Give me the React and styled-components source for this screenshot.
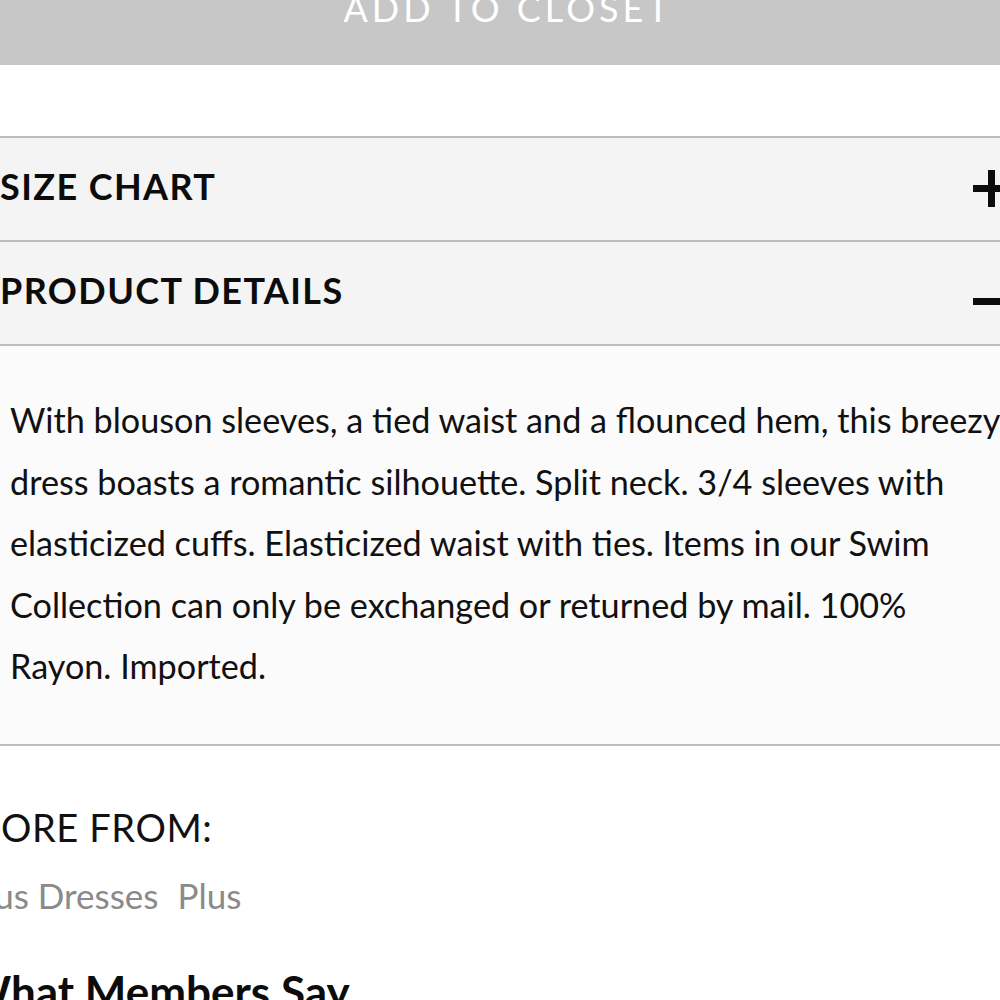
import styled, { createGlobalStyle } from 'styled-components';

const GlobalStyle = createGlobalStyle`
  html, body {
    margin: 0;
    padding: 0;
    background: #ffffff;
  }
  body {
    font-family: Lato, "Open Sans", sans-serif;
    color: #111;
  }
`;

const Viewport = styled.div`
  width: 1000px;
  height: 1000px;
  overflow: hidden;
`;

const Page = styled.div`
  width: 1086px;
  margin-left: -35px;
  display: flex;
  flex-direction: column;
`;

const CloseButton = styled.button`
  height: 118px;
  margin-top: -53px;
  border: none;
  background: #c7c7c7;
  color: #ffffff;
  font-family: Lato, sans-serif;
  font-size: 36px;
  font-weight: 400;
  letter-spacing: 4px;
  display: flex;
  align-items: center;
  justify-content: center;
  padding: 4px 0 0;
`;

const Accordion = styled.div`
  margin-top: 71px;
  border-top: 2px solid #bdbdbd;
`;

const Header = styled.div`
  height: 104px;
  box-sizing: border-box;
  background: #f4f4f4;
  border-bottom: 2px solid #bdbdbd;
  display: flex;
  align-items: center;
  justify-content: space-between;
  padding: 0 42px 6px 35px;
`;

const Title = styled.span`
  font-size: 36px;
  font-weight: 700;
  letter-spacing: 1.4px;
  color: #0c0c0c;
`;

const Toggle = styled.span`
  position: relative;
  width: 36px;
  height: 37px;
  flex-shrink: 0;
  transform: translateY(${p => (p.$open ? '11px' : '2px')});

  &::before {
    content: '';
    position: absolute;
    left: 0;
    right: 0;
    top: 15px;
    height: 7px;
    background: #0c0c0c;
  }

  &::after {
    content: '';
    display: ${p => (p.$open ? 'none' : 'block')};
    position: absolute;
    top: 0;
    bottom: 0;
    left: 15px;
    width: 7px;
    background: #0c0c0c;
  }
`;

const Body = styled.div`
  background: #fbfbfb;
  border-bottom: 2px solid #bdbdbd;
  padding: 43px 20px 0 45px;
  height: 400px;
  box-sizing: border-box;
`;

const Description = styled.p`
  margin: 0;
  font-size: 34.2px;
  line-height: 61.5px;
  color: #111;
  white-space: nowrap;
`;

const MoreFrom = styled.section`
  padding-top: 56px;
  display: flex;
  flex-direction: column;
`;

const Label = styled.h3`
  margin: 0;
  font-size: 38px;
  font-weight: 400;
  letter-spacing: 0.6px;
  line-height: 50px;
  color: #111;
`;

const Links = styled.div`
  display: flex;
  gap: 19px;
  margin-top: 18px;
`;

const CategoryLink = styled.a`
  font-size: 35px;
  line-height: 50px;
  color: #8a8a8a;
  text-decoration: none;
`;

const Reviews = styled.h2`
  margin: 46px 0 0;
  font-size: 44px;
  font-weight: 700;
  line-height: 50px;
  color: #0c0c0c;
`;

const lines = [
  'With blouson sleeves, a tied waist and a flounced hem, this breezy',
  'dress boasts a romantic silhouette. Split neck. 3/4 sleeves with',
  'elasticized cuffs. Elasticized waist with ties. Items in our Swim',
  'Collection can only be exchanged or returned by mail. 100%',
  'Rayon. Imported.',
];

export default function App() {
  return (
    <>
      <GlobalStyle />
      <Viewport>
        <Page>
          <CloseButton>ADD TO CLOSET</CloseButton>
          <Accordion>
            <Header>
              <Title>SIZE CHART</Title>
              <Toggle />
            </Header>
            <Header>
              <Title>PRODUCT DETAILS</Title>
              <Toggle $open />
            </Header>
            <Body>
              <Description>
                {lines.map((l, i) => (
                  <span key={i}>
                    {l}
                    {i < lines.length - 1 && <br />}
                  </span>
                ))}
              </Description>
            </Body>
          </Accordion>
          <MoreFrom>
            <Label>MORE FROM:</Label>
            <Links>
              <CategoryLink href="#">Plus Dresses</CategoryLink>
              <CategoryLink href="#">Plus</CategoryLink>
            </Links>
          </MoreFrom>
          <Reviews>What Members Say</Reviews>
        </Page>
      </Viewport>
    </>
  );
}
